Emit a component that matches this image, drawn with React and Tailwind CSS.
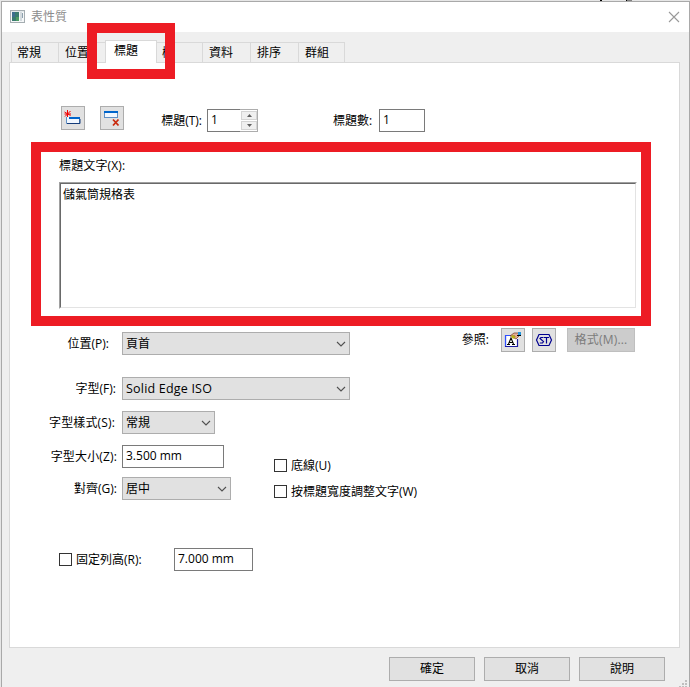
import { useState } from "react";

const ToolButton = ({ children, className = "" }) => (
  <button className={`flex h-6 w-6 shrink-0 items-center justify-center border border-[#adadad] bg-[#e1e1e1] ${className}`}>
    {children}
  </button>
);

const Select = ({ value, className = "", textClass = "" }) => (
  <div className={`flex h-[23px] shrink-0 items-center justify-between border border-[#adadad] bg-[#e1e1e1] pl-[3px] pr-[3px] ${className}`}>
    <span className={textClass}>{value}</span>
    <svg width="10" height="6" viewBox="0 0 10 6" fill="none" stroke="#505050" strokeWidth="1.1">
      <path d="M1 1l4 4 4-4" />
    </svg>
  </div>
);

const Field = ({ defaultValue, className = "" }) => (
  <input
    defaultValue={defaultValue}
    className={`h-[23px] shrink-0 border border-[#7a7a7a] bg-white pb-[2px] pl-[3px] outline-none ${className}`}
  />
);

// label column, right edge differs per row
const Label = ({ children, className = "" }) => (
  <span className={`shrink-0 text-right whitespace-nowrap ${className}`}>{children}</span>
);

const Check = ({ label, className = "" }) => {
  const [checked, setChecked] = useState(false);
  return (
    <label className={`flex h-[13px] items-center gap-1 whitespace-nowrap ${className}`}>
      <input
        type="checkbox"
        checked={checked}
        onChange={() => setChecked(!checked)}
        className="h-[13px] w-[13px] shrink-0 appearance-none border border-[#333333] bg-white checked:bg-[#333333]"
      />
      {label}
    </label>
  );
};

const Tab = ({ children, className = "" }) => (
  <div className={`h-5 shrink-0 overflow-hidden border-t border-l border-[#d9d9d9] pl-[5px] leading-[20px] whitespace-nowrap ${className}`}>
    {children}
  </div>
);

function App() {
  return (
    <div className="relative h-[687px] w-[690px] overflow-hidden bg-[#e6e6e6] pt-px pl-px font-['Open_Sans','Noto_Sans_CJK_TC',sans-serif] text-[12px] leading-[16px] font-[370] text-black">
      <div className="flex h-[686px] flex-col border-t border-r border-l border-[#a9a9a9] bg-[#efefef]">
        {/* title bar */}
        <div className="flex h-[30px] shrink-0 items-center bg-white pl-2">
          <svg className="-mt-px" width="15" height="13" viewBox="0 0 15 13" shapeRendering="crispEdges">
            <rect width="15" height="13" fill="#a5adb1" />
            <rect x="1" y="1" width="13" height="1" fill="#e3e8ea" />
            <rect x="1" y="2" width="13" height="10" fill="#f5f7f8" />
            <rect x="2" y="2" width="7" height="9" fill="#397b70" />
            <rect x="2" y="2" width="3" height="5" fill="#3d6e8f" />
            <rect x="6" y="7" width="3" height="4" fill="#4d9b63" />
            <rect x="10" y="2" width="2" height="9" fill="#d3dade" />
            <rect x="12" y="3" width="1" height="5" fill="#8da0ad" />
          </svg>
          <span className="ml-[6px] text-[#8c8c8c]">表性質</span>
          <svg className="mr-[9px] ml-auto -mt-px" width="12" height="12" viewBox="0 0 12 12" stroke="#999999" strokeWidth="1.1">
            <path d="M1 1l10 10M11 1L1 11" />
          </svg>
        </div>

        {/* tabs */}
        <div className="flex h-[30px] shrink-0 items-end pl-[9px]">
          <Tab className="w-[47px]">常規</Tab>
          <Tab className="w-[47px] pl-[6px]">位置</Tab>
          <div className="z-10 -mb-px h-[23px] w-[52px] shrink-0 border-x border-t border-[#d9d9d9] bg-white pl-2 leading-[20px]">標題</div>
          <Tab className="w-[45px] border-l-0">欄</Tab>
          <Tab className="w-12 pl-[6px]">資料</Tab>
          <Tab className="w-12 pl-[6px]">排序</Tab>
          <Tab className="w-[47px] border-r pl-[6px]">群組</Tab>
        </div>

        {/* page */}
        <div className="ml-[7px] flex h-[586px] w-[671px] shrink-0 flex-col border border-[#d9d9d9] bg-white">
          <div className="mt-[43px] ml-[51px] flex h-[26px] items-start">
            <ToolButton>
              <svg width="18" height="18" viewBox="0 0 18 18">
                <path d="M2.500 8v6.500h13V9" fill="#f1f7ff" stroke="#5f8fc4" />
                <path d="M3 14.500h13V10" fill="none" stroke="#143c7a" />
                <rect x="5" y="8" width="11" height="2" fill="#0065cc" />
                <path d="M3.500 1v7M.5 3l6 3.500M6.500 2L1 7.500M.5 5h6.500" stroke="#f00000" strokeWidth="1" />
              </svg>
            </ToolButton>
            <ToolButton className="ml-[15px]">
              <svg width="18" height="18" viewBox="0 0 18 18">
                <rect x="1.500" y="2.500" width="13" height="6" fill="#f1f7ff" stroke="#5f8fc4" />
                <path d="M1 2h14v2H1z" fill="#0065cc" />
                <path d="M9.500 10.500l6 6M15.500 10.500l-6 6" stroke="#e1e1e1" strokeWidth="3.500" />
                <path d="M10 10.500l5.500 6M15.500 10.500l-5.500 6" stroke="#c92a0e" strokeWidth="1.800" />
              </svg>
            </ToolButton>
            <Label className="mt-[7px] ml-9 w-[42px]">標題(T):</Label>
            <div className="mt-[3px] ml-[5px] flex">
              <Field defaultValue="1" className="w-[33px] border-r-0" />
              <div className="flex h-[23px] w-[18px] flex-col gap-px border-y border-r border-[#adadad] bg-white py-px pl-px">
                <div className="flex h-[9px] w-[16px] items-center justify-center border border-[#d4d4d4] bg-[#f0f0f0]">
                  <svg width="5" height="3" viewBox="0 0 5 3" fill="#606060"><path d="M0 3L2.500 0 5 3z" /></svg>
                </div>
                <div className="flex h-[9px] w-[16px] items-center justify-center border border-[#d4d4d4] bg-[#f0f0f0]">
                  <svg width="5" height="3" viewBox="0 0 5 3" fill="#606060"><path d="M0 0L2.500 3 5 0z" /></svg>
                </div>
              </div>
            </div>
            <Label className="mt-[7px] ml-[75px] w-[39px]">標題數:</Label>
            <Field defaultValue="1" className="mt-[3px] ml-[7px] w-[46px]" />
          </div>

          <div className="mt-[26px] ml-[49px] h-4 tracking-[0.15px]">標題文字(X):</div>
          <div className="mt-2 ml-[49px] h-[127px] w-[578px] shrink-0 border border-t-[#a0a0a0] border-r-white border-b-white border-l-[#a0a0a0]">
            <textarea
              defaultValue="儲氣筒規格表"
              className="block h-[125px] w-[576px] resize-none border border-t-[#696969] border-r-[#e3e3e3] border-b-[#e3e3e3] border-l-[#696969] bg-white pt-[3px] pl-[2px] outline-none"
            />
          </div>

          <div className="mt-[19px] flex h-[27px] items-start">
            <Label className="mt-2 w-[99px]">位置(P):</Label>
            <Select value="頁首" className="mt-1 ml-[13px] w-[228px]" />
            <Label className="mt-1 ml-[102px] w-[37px]">參照:</Label>
            <ToolButton className="ml-3">
              <svg width="18" height="18" viewBox="0 0 18 18">
                <path d="M2.500 4.500h11v11h-11z" fill="#fff" />
                <path d="M1 4.500h8M1.500 4v12" stroke="#2f50ff" strokeWidth="1.200" />
                <path d="M1 15.500h12.500V8" fill="none" stroke="#1a1aa0" strokeWidth="1.200" />
                <path d="M3 13.500h3M8 13.500h3M4.500 13l2.500-6 2.500 6M5.500 11.500h3.500" fill="none" stroke="#000" strokeWidth="1.100" />
                <path d="M6 5l4-3h4l2 2-4 4-2-1 1-2z" fill="#e3ad94" stroke="#713526" strokeWidth=".7" />
                <path d="M7 5l2 3 3-2-3-2z" fill="#b8b018" />
                <path d="M14 1h3v3h-3z" fill="#2196df" />
                <path d="M13 4.500h4" stroke="#000" />
              </svg>
            </ToolButton>
            <ToolButton className="ml-[7px]">
              <svg width="18" height="14" viewBox="0 0 18 14" fill="none" stroke="#000090" strokeWidth="1.200">
                <path d="M4 1.500h10L16.500 7 14 12.500H4L1.500 7z" />
                <path d="M8.500 4.500H6L5 5.500l3.500 3-1 1.500H4.800M9 4.500h5M11.500 4.500v6" strokeWidth="1.200" />
              </svg>
            </ToolButton>
            <button disabled className="ml-[11px] h-6 w-[68px] shrink-0 border border-[#bfbfbf] bg-[#cccccc] tracking-[0.2px] text-[#7b7b7b]">格式(M)...</button>
          </div>

          <div className="mt-[22px] flex h-[23px] items-center">
            <Label className="w-[106px]">字型(F):</Label>
            <Select value="Solid Edge ISO" textClass="text-[12.5px] tracking-[0.2px]" className="ml-[6px] w-[228px]" />
          </div>
          <div className="mt-[11px] flex h-[23px] items-center">
            <Label className="w-[105px] tracking-[0.15px]">字型樣式(S):</Label>
            <Select value="常規" className="ml-[7px] w-[93px]" />
          </div>

          <div className="mt-[11px] flex h-[55px] items-start">
            <div className="w-[221px] shrink-0">
              <div className="flex h-[23px] items-center">
                <Label className="w-[107px] tracking-[0.15px]">字型大小(Z):</Label>
                <Field defaultValue="3.500 mm" className="ml-[5px] w-[102px]" />
              </div>
              <div className="mt-[9px] flex h-[23px] items-center">
                <Label className="w-[107px]">對齊(G):</Label>
                <Select value="居中" className="ml-[5px] w-[109px]" />
              </div>
            </div>
            <div className="mt-[14px] ml-[43px] flex flex-col gap-[13px]">
              <Check label="底線(U)" />
              <Check label="按標題寬度調整文字(W)" />
            </div>
          </div>

          <div className="mt-12 ml-[49px] flex h-[23px] items-center">
            <Check label="固定列高(R):" className="w-[115px]" />
            <Field defaultValue="7.000 mm" className="w-[79px]" />
          </div>
        </div>

        {/* dialog buttons */}
        <div className="mt-[9px] mr-6 flex justify-end gap-[9px]">
          {["確定", "取消", "說明"].map((text) => (
            <button key={text} className="h-6 w-[86px] border border-[#adadad] bg-[#e1e1e1]">{text}</button>
          ))}
        </div>
      </div>

      <svg className="absolute right-[3px] bottom-0" width="8" height="7" viewBox="0 0 8 7" fill="#bfbfbf">
        <path d="M6 0h2v2H6zM3 3h2v2H3zM6 3h2v2H6zM0 6h2v1H0zM3 6h2v1H3zM6 6h2v1H6z" />
      </svg>
      <div className="absolute top-0 left-[600px] h-px w-[2px] bg-black" />
      <div className="absolute top-0 left-[626px] h-px w-[6px] border-l border-black bg-[#808080]" />

      {/* highlight frames */}
      <div className="pointer-events-none absolute top-[23px] left-[87px] z-20 h-14 w-[88px] border-10 border-[#ed1c24]" />
      <div className="pointer-events-none absolute top-[142px] left-[31px] z-20 h-[184px] w-[620px] border-10 border-[#ed1c24]" />
    </div>
  );
}

export default App;
